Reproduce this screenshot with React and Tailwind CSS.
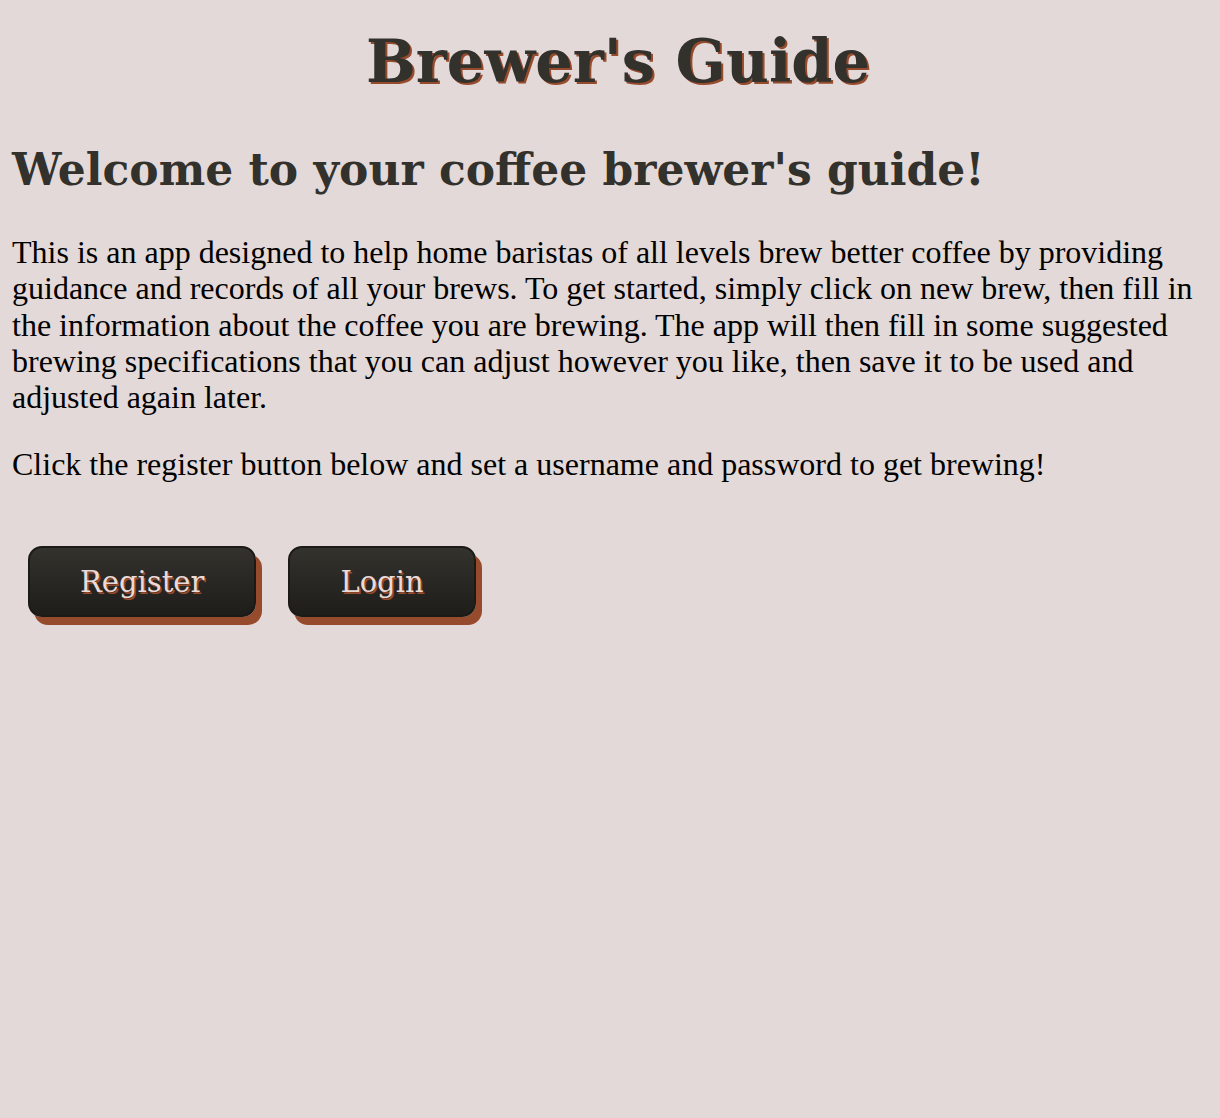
export default function App() {
  return (
    <div className="min-h-[1118px] bg-[#e3d9d8] text-black">
      <h1 className="pt-[22px] pl-[16px] text-center font-['DejaVu_Serif',Georgia,serif] text-[59px] font-bold leading-[80px] text-[#33312c] [text-shadow:2px_2px_0_#974b2d]">
        Brewer's Guide
      </h1>

      <main className="px-3 font-['Liberation_Serif','Times_New_Roman',serif]">
        <h2 className="mt-[40px] font-['DejaVu_Serif',Georgia,serif] text-[44px] font-bold leading-[56px] text-[#33312c]">
          Welcome to your coffee brewer's guide!
        </h2>

        <p className="mt-[36px] text-[32px] leading-[36.25px]">
          This is an app designed to help home baristas of all levels brew better coffee by providing
          guidance and records of all your brews. To get started, simply click on new brew, then fill in
          the information about the coffee you are brewing. The app will then fill in some suggested
          brewing specifications that you can adjust however you like, then save it to be used and
          adjusted again later.
        </p>

        <p className="mt-[31px] text-[32px] leading-[36.25px]">
          Click the register button below and set a username and password to get brewing!
        </p>

        <div className="mt-[63px] flex gap-8 pl-4">
          {['Register', 'Login'].map((label) => (
            <button
              key={label}
              className="h-[71px] rounded-[14px] border-2 border-[#1c1a17] bg-gradient-to-b from-[#34322d] to-[#1f1d1a] px-[50px] pt-[3px] font-['DejaVu_Serif',Georgia,serif] text-[29px] text-[#eadbd9] shadow-[6px_8px_0_#974b2d] [text-shadow:1.5px_1.5px_0_#974b2d]"
            >
              {label}
            </button>
          ))}
        </div>
      </main>
    </div>
  );
}
